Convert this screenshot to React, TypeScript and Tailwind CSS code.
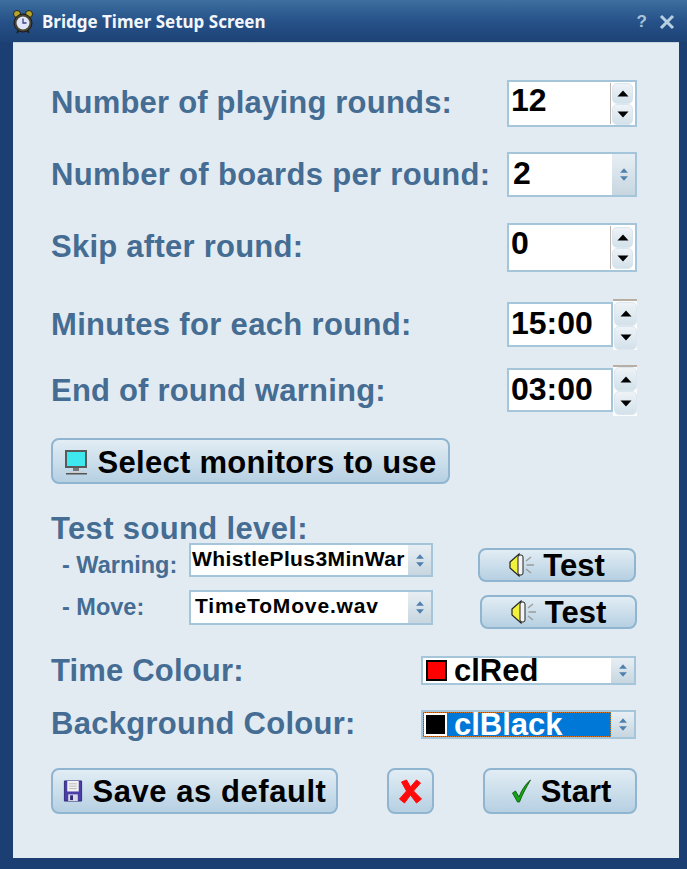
const sans = { fontFamily: '"Liberation Sans", Arial, sans-serif' };

function ArrowUp({ className = '' }: { className?: string }) {
  return (
    <svg className={className} width="12" height="7" viewBox="0 0 12 7">
      <path d="M6 0.5L11.5 6.5H0.5Z" fill="currentColor" />
    </svg>
  );
}

function ArrowDown({ className = '' }: { className?: string }) {
  return (
    <svg className={className} width="12" height="7" viewBox="0 0 12 7">
      <path d="M6 6.5L11.5 0.5H0.5Z" fill="currentColor" />
    </svg>
  );
}

function SpinButton({ up, tall }: { up: boolean; tall?: boolean }) {
  return (
    <div
      className={`flex items-center justify-center rounded-[5px] border border-[#dbe6ee] bg-gradient-to-b from-[#eef3f7] to-[#d3e1ea] text-black ${
        tall ? 'h-[24px] w-[23px]' : 'h-[21px] w-[21px]'
      }`}
    >
      {up ? <ArrowUp /> : <ArrowDown />}
    </div>
  );
}

function InlineSpin({ value }: { value: string }) {
  return (
    <div className="flex h-full w-[130px] items-stretch border-2 border-[#a5c5da] bg-white">
      <span className="flex-1 pl-[2px] text-[32px] font-bold leading-[36px] text-black">{value}</span>
      <div className="my-[1px] w-[1px] bg-[#b9b5ae]" />
      <div className="ml-[1px] mr-[2px] flex flex-col justify-center">
        <SpinButton up />
        <SpinButton up={false} />
      </div>
    </div>
  );
}

function TimeSpin({ value }: { value: string }) {
  return (
    <div className="flex h-full w-[131px] items-center">
      <div className="h-full w-[106px] border-2 border-[#a5c5da] bg-white pl-[2px] text-[32px] font-bold leading-[38px] text-black">
        {value}
      </div>
      <div className="-my-[4px] flex h-[51px] flex-col justify-center border-t-2 border-[#b7aea4] bg-[#fbfdfd] pl-[1px]">
        <SpinButton up tall />
        <SpinButton up={false} tall />
      </div>
    </div>
  );
}

function ComboArrow() {
  return (
    <div className="flex w-[23px] shrink-0 flex-col items-center justify-center gap-[3px] bg-gradient-to-b from-[#e8eff4] to-[#c7d6e0] text-[#4f80ad]">
      <ArrowUp className="h-[5px] w-[10px]" />
      <ArrowDown className="h-[5px] w-[10px]" />
    </div>
  );
}

function FileCombo({ value, className }: { value: string; className: string }) {
  return (
    <div className={`flex w-[244px] items-stretch border-2 border-[#a5c5da] bg-white ${className}`}>
      <span className="flex-1 whitespace-nowrap text-[21px] font-bold leading-[28px] text-black">{value}</span>
      <ComboArrow />
    </div>
  );
}

function PushButton({ className, children }: { className: string; children: React.ReactNode }) {
  return (
    <button
      className={`flex items-center justify-center rounded-[8px] border-2 border-[#8fb5d0] bg-gradient-to-b from-[#e2edf4] to-[#b6d0e2] font-bold text-black ${className}`}
    >
      {children}
    </button>
  );
}

function ClockIcon() {
  return (
    <svg width="22" height="24" viewBox="0 0 22 24">
      <circle cx="5" cy="4" r="3.5" fill="#b8a62a" stroke="#222" />
      <circle cx="17" cy="4" r="3.5" fill="#b8a62a" stroke="#222" />
      <path d="M5 23l2-3M17 23l-2-3" stroke="#222" strokeWidth="2" />
      <circle cx="11" cy="13" r="9" fill="#4a4530" stroke="#1a1a1a" />
      <circle cx="11" cy="13" r="6.5" fill="#dfe6fb" />
      <path d="M11 8.5V13H14.5" fill="none" stroke="#3a3f7a" strokeWidth="1.3" />
    </svg>
  );
}

function MonitorIcon() {
  return (
    <svg className="-mt-[3px]" width="25" height="27" viewBox="0 0 25 27">
      <rect x="1" y="1" width="22" height="18" fill="#5a5a5a" />
      <rect x="3" y="3" width="18" height="14" fill="#3fe7ef" />
      <path d="M9 19h6v3H9z" fill="#777" />
      <path d="M2 24h21v1.5H2z" fill="#555" />
      <path d="M5 22.5h15V24H5z" fill="#c9cdd0" />
    </svg>
  );
}

function SpeakerIcon() {
  return (
    <svg className="-mt-[3px]" width="27" height="26" viewBox="0 0 27 26">
      <path d="M1 10L10 2V24L1 16Z" fill="#f2f23c" stroke="#222" strokeWidth="1.2" />
      <rect x="9" y="3" width="5" height="20" rx="2" fill="#f4f4f4" stroke="#222" />
      <path d="M17 9l5-4M17.5 13H25M17 17l5 4" stroke="#9a9a9a" strokeWidth="1.3" />
    </svg>
  );
}

function DiskIcon() {
  return (
    <svg className="-mt-[3px]" width="20" height="22" viewBox="0 0 20 23">
      <path d="M1 1H19V22H1Z" fill="#4a3fa8" stroke="#2e2a78" />
      <rect x="4" y="1" width="12" height="11" fill="#f1f1f1" />
      <path d="M6 4h8M6 6.5h8M6 9h8" stroke="#b9b9b9" />
      <rect x="5" y="15" width="10" height="7" fill="#d9d9e6" />
      <rect x="7" y="16" width="3" height="5" fill="#2e2a78" />
    </svg>
  );
}

function CrossIcon() {
  return (
    <svg width="27" height="25" viewBox="0 0 24 25">
      <path d="M3 3L8 1L12 8L18 1L22 4L15 12L23 20L18 24L12 16L6 24L1 20L8 12Z" fill="#ff0a0a" strokeLinejoin="round" stroke="#ff0a0a" />
    </svg>
  );
}

function CheckIcon() {
  return (
    <svg className="-mt-[3px]" width="25" height="24" viewBox="0 0 20 24">
      <path d="M1 14L4 12L7.5 18C10 11 14 5 19 1C15 8 11 15 8 23H6Z" fill="#11a811" stroke="#0a4a0a" strokeWidth="0.8" />
    </svg>
  );
}

const labelClass = 'text-[31px] font-bold leading-none text-[#456c92]';
const subLabelClass = 'text-[23.5px] font-bold leading-none text-[#456c92]';

export default function App() {
  return (
    <div className="flex h-[869px] w-[687px] flex-col bg-[#1c3f73] pb-[11px] pl-[13px] pr-[8px]" style={sans}>
      <div className="-ml-[13px] -mr-[8px] flex h-[42px] shrink-0 items-center bg-gradient-to-b from-[#3d6f9f] via-[#265289] to-[#1d4276] pl-[12px] pr-[12px] pt-[2px]">
        <ClockIcon />
        <span className="ml-[8px] flex-1 text-[17px] font-bold text-[#f3f7fb]" style={{ fontFamily: '"Noto Sans", sans-serif' }}>
          Bridge Timer Setup Screen
        </span>
        <span className="mr-[12px] text-[17px] font-bold text-[#a9c4d9]">?</span>
        <svg width="16" height="16" viewBox="0 0 16 16">
          <path d="M2 2L14 14M14 2L2 14" stroke="#b9d0e2" strokeWidth="3" />
        </svg>
      </div>

      <div className="flex flex-1 flex-col border-t border-[#c6d3df] bg-[#e3ebf2] pl-[38px] pt-[37px]">
        <div className="flex h-[47px] items-center">
          <span className={`${labelClass} w-[456px] pb-[2px] tracking-[0.2px]`}>Number of playing rounds:</span>
          <InlineSpin value="12" />
        </div>

        <div className="mt-[25px] flex h-[45px] items-center">
          <span className={`${labelClass} w-[456px] tracking-[0.33px]`}>Number of boards per round:</span>
          <div className="flex h-full w-[130px] items-stretch border-2 border-[#a5c5da] bg-white">
            <span className="flex-1 pl-[4px] text-[32px] font-bold leading-[38px] text-black">2</span>
            <ComboArrow />
          </div>
        </div>

        <div className="mt-[26px] flex h-[49px] items-center">
          <span className={`${labelClass} w-[456px] pb-[2px] tracking-[0.25px]`}>Skip after round:</span>
          <InlineSpin value="0" />
        </div>

        <div className="mt-[30px] flex h-[45px] items-center">
          <span className={`${labelClass} w-[456px] tracking-[0.33px]`}>Minutes for each round:</span>
          <TimeSpin value="15:00" />
        </div>

        <div className="mt-[21px] flex h-[44px] items-center">
          <span className={`${labelClass} w-[456px] tracking-[0.2px]`}>End of round warning:</span>
          <TimeSpin value="03:00" />
        </div>

        <PushButton className="mt-[26px] h-[46px] w-[399px] gap-[8px] pt-[5px] text-[31px] tracking-[0.3px]">
          <MonitorIcon />
          Select monitors to use
        </PushButton>

        <div className={`${labelClass} mt-[28px] flex h-[30px] items-center pt-[2px] tracking-[0.35px]`}>Test sound level:</div>

        <div className="mt-[1px] flex h-[34px] items-start">
          <span className={`${subLabelClass} ml-[11px] mt-[11px] w-[127px]`}>- Warning:</span>
          <FileCombo value="WhistlePlus3MinWar" className="h-[34px] pl-[1px] tracking-[0.4px]" />
          <PushButton className="ml-[45px] mt-[5px] h-[34px] w-[158px] shrink-0 gap-[7px] pt-[3px] text-[31px]">
            <SpeakerIcon />
            Test
          </PushButton>
        </div>

        <div className="mt-[13px] flex h-[35px] items-start">
          <span className={`${subLabelClass} ml-[11px] mt-[6px] w-[127px]`}>- Move:</span>
          <FileCombo value="TimeToMove.wav" className="h-[35px] pl-[4px] tracking-[0.85px]" />
          <PushButton className="ml-[47px] mt-[5px] h-[34px] w-[157px] shrink-0 gap-[7px] pt-[3px] text-[31px]">
            <SpeakerIcon />
            Test
          </PushButton>
        </div>

        <div className="mt-[31px] flex h-[29px] items-center">
          <span className={`${labelClass} w-[370px] tracking-[0.17px]`}>Time Colour:</span>
          <div className="flex h-full w-[215px] items-stretch border-2 border-[#a5c5da] bg-white">
            <div className="flex flex-1 items-center pl-[3px]">
              <span className="h-[21px] w-[21px] border-2 border-black bg-[#ff0000]" />
              <span className="ml-[7px] text-[31px] font-bold leading-none text-black">clRed</span>
            </div>
            <ComboArrow />
          </div>
        </div>

        <div className="mt-[25px] flex h-[29px] items-center">
          <span className={`${labelClass} w-[370px] pb-[2px] tracking-[0.28px]`}>Background Colour:</span>
          <div className="flex h-full w-[215px] items-stretch border-2 border-[#a5c5da] bg-white">
            <div className="flex flex-1 items-center border border-dotted border-[#d9761f] bg-[#0078d7]">
              <span className="flex h-full w-[23px] items-center justify-center bg-white">
                <span className="h-[19px] w-[19px] bg-black" />
              </span>
              <span className="ml-[7px] text-[31px] font-bold leading-none text-white">clBlack</span>
            </div>
            <ComboArrow />
          </div>
        </div>

        <div className="mt-[29px] flex h-[46px] items-stretch">
          <PushButton className="w-[287px] gap-[10px] pt-[3px] text-[31px] tracking-[0.55px]">
            <DiskIcon />
            Save as default
          </PushButton>
          <PushButton className="ml-[49px] w-[47px]">
            <CrossIcon />
          </PushButton>
          <PushButton className="ml-[49px] w-[154px] gap-[7px] pt-[3px] text-[31px]">
            <CheckIcon />
            Start
          </PushButton>
        </div>
      </div>
    </div>
  );
}
